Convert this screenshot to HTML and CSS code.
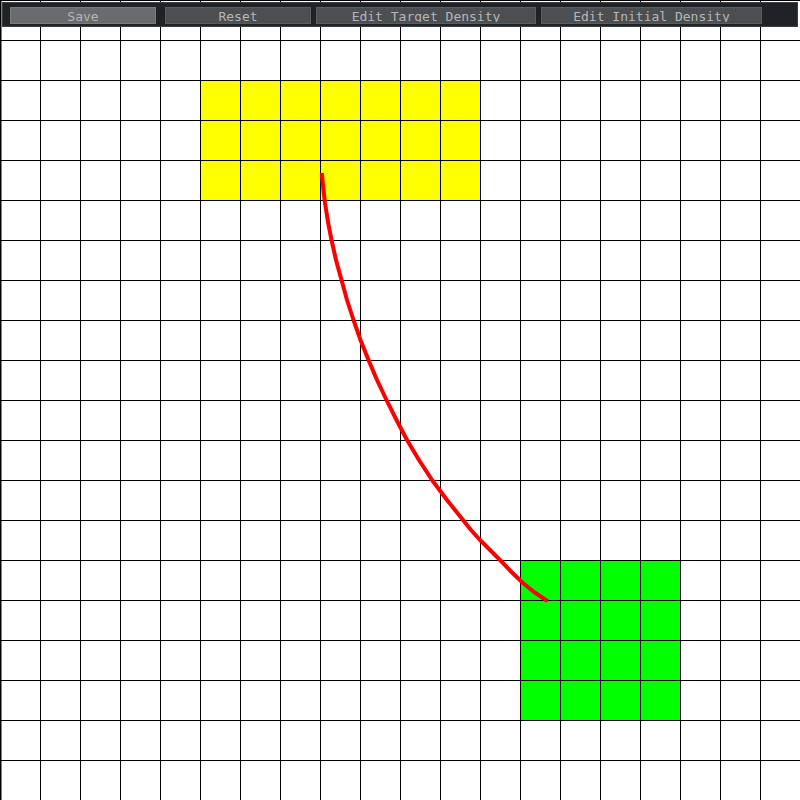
FILE: index.html
```html
<!DOCTYPE html>
<html>
<head>
<meta charset="utf-8">
<link rel="stylesheet" href="styles.css">
</head>
<body>
<div class="stage">
  <svg class="canvas" width="800" height="800" viewBox="0 0 800 800">
    <defs>
      <pattern id="grid" width="40" height="40" patternUnits="userSpaceOnUse">
        <path d="M0.5 0V40M0 0.5H40" stroke="#000" stroke-width="1" fill="none"/>
      </pattern>
    </defs>
    <rect x="0" y="0" width="800" height="800" fill="#fff"/>
    <rect x="200" y="80" width="280" height="120" fill="#ffff00"/>
    <rect x="520" y="560" width="160" height="160" fill="#00ff00"/>
    <rect x="0" y="0" width="800" height="800" fill="url(#grid)"/>
    <path d="M1 0V800" stroke="#000" stroke-width="1"/>
    <polyline points="322,175 323.5,190 325,203 328,222 331.5,240 336,260 341.5,280 347,300 353.5,320 360.5,340 368.5,360 377,380 386.5,400 396.5,420 407,440 419,460 432,480 447,500 463,520 471,530 480,540 490,550 500,560 511.5,572 523,583 534,592 546,600" fill="none" stroke="#ff0000" stroke-width="4" stroke-linecap="square" stroke-linejoin="round"/>
  </svg>
  <div class="toolbar">
    <button class="btn btn-active btn-save"><span class="label">Save</span></button>
    <button class="btn btn-reset"><span class="label">Reset</span></button>
    <button class="btn btn-target"><span class="label">Edit Target Density</span></button>
    <button class="btn btn-initial"><span class="label">Edit Initial Density</span></button>
  </div>
</div>
</body>
</html>
```
FILE: styles.css
```css
html, body {
  margin: 0;
  padding: 0;
  background: #fff;
}

.stage {
  position: relative;
  width: 800px;
  height: 800px;
  overflow: hidden;
}

.canvas {
  display: block;
}

.toolbar {
  position: absolute;
  top: 2px;
  left: 2px;
  width: 796px;
  height: 25px;
  box-sizing: border-box;
  background: #1f2327;
  border: 1px solid #3c4044;
  display: flex;
  align-items: flex-start;
  padding: 4px 0 0 7px;
  font-family: "DejaVu Sans Mono", "Liberation Mono", monospace;
}

.btn {
  height: 17px;
  box-sizing: border-box;
  margin: 0;
  padding: 0;
  border: 1px solid #5b5e61;
  background: #4c4f52;
  color: #b4b6b7;
  font-family: inherit;
  font-size: 13px;
  overflow: hidden;
  display: block;
  text-align: center;
}

.btn-active {
  background: #696c6e;
  border-color: #7a7d7f;
}

.label {
  display: block;
  height: 12px;
  line-height: 13px;
  overflow: hidden;
  white-space: nowrap;
}

.btn-save { width: 146px; }
.btn-reset { width: 146px; margin-left: 9px; }
.btn-target { width: 220px; margin-left: 5px; }
.btn-initial { width: 221px; margin-left: 5px; }
```
